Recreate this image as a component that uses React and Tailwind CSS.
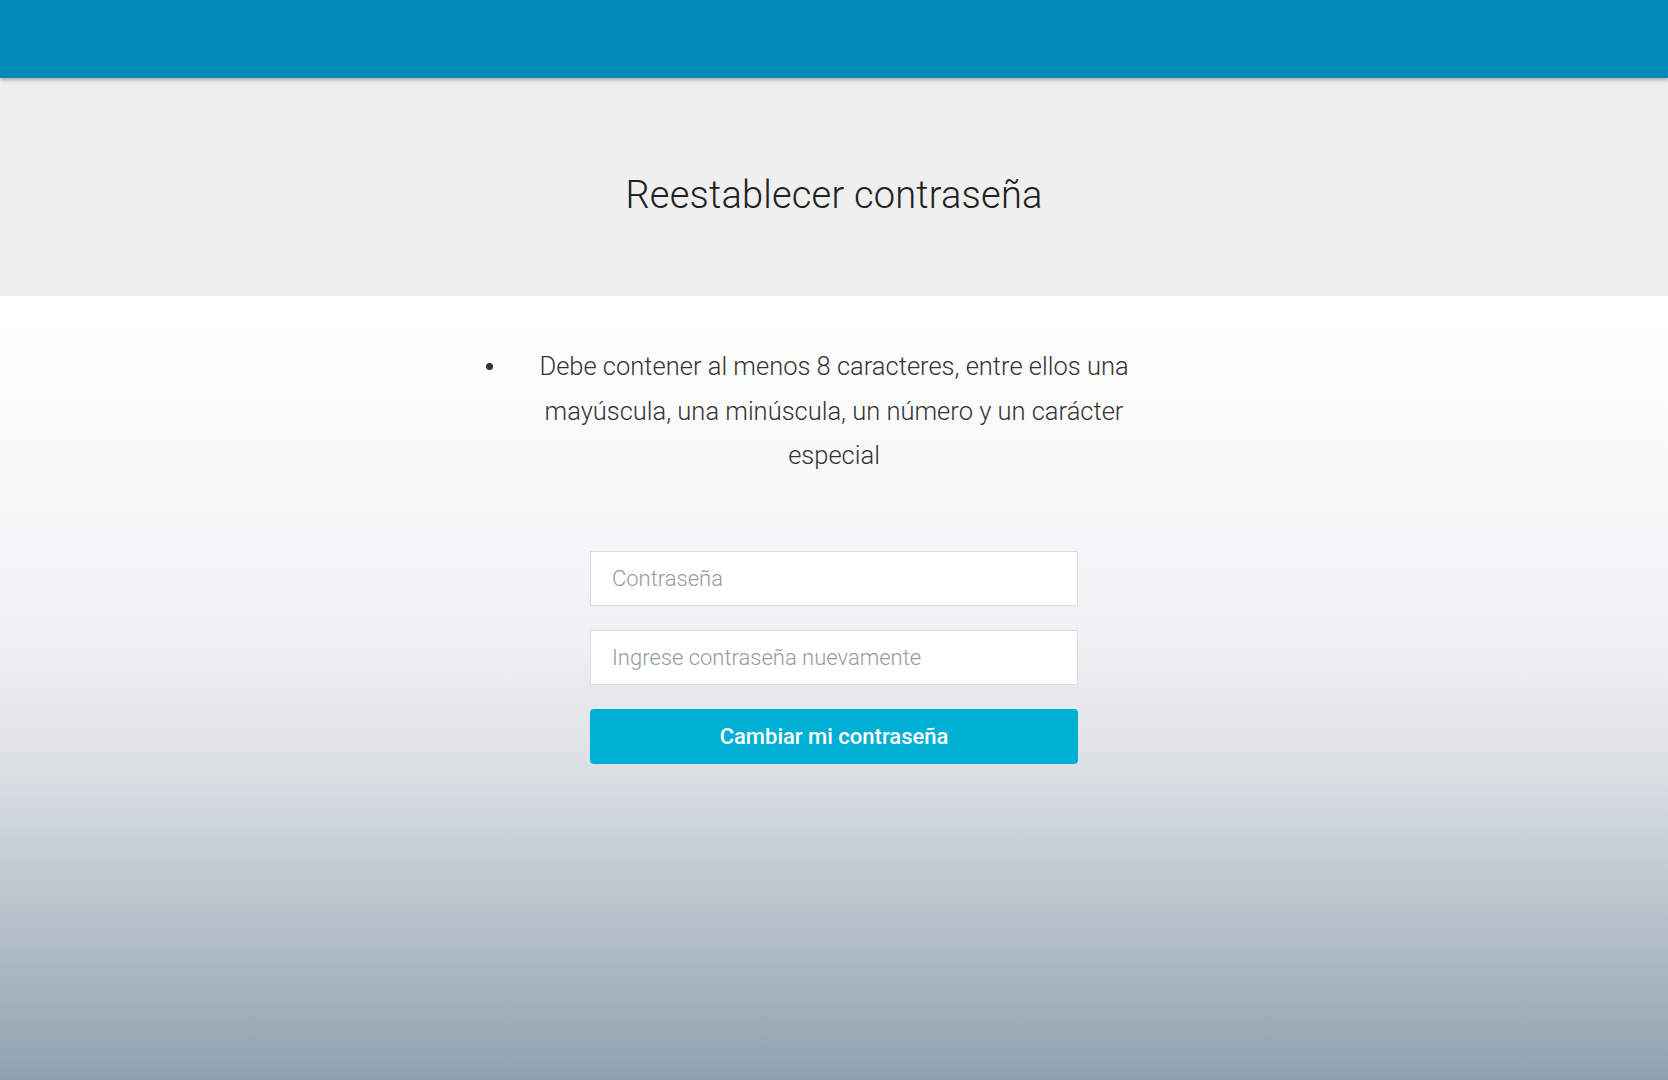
export default function App() {
  return (
    <div className="min-h-screen flex flex-col font-['Roboto','Liberation_Sans',sans-serif] text-[#333]">
      {/* top bar */}
      <header className="h-[78px] bg-[#0189b9] shadow-[0_2px_4px_rgba(0,0,0,0.3)] relative z-10" />

      {/* title band */}
      <section className="h-[218px] bg-[#efefef] flex items-center justify-center pt-[16px]">
        <h1 className="text-[38px] font-light tracking-[0.2px] text-[#222]">Reestablecer contraseña</h1>
      </section>

      {/* form area */}
      <main className="flex-1 bg-[linear-gradient(to_bottom,#ffffff_0%,#f8f8f9_25%,#eef0f2_45%,#dfe3e7_58%,#c4cdd5_72%,#aab7c2_86%,#8fa1b0_100%)] pt-[48px] pb-[40px]">
        <div className="mx-auto w-[620px] flex">
          <span className="-ml-[38px] w-[38px] shrink-0 pt-[19px]">
            <span className="block w-[7px] h-[7px] rounded-full bg-[#333]" />
          </span>
          <p className="flex-1 text-center text-[25.5px] leading-[44.7px] font-light text-[#333]">
            Debe contener al menos 8 caracteres, entre ellos una mayúscula, una minúscula, un número y un carácter especial
          </p>
        </div>

        <form className="mx-auto mt-[73px] w-[488px] flex flex-col gap-[24px]">
          <input
            type="password"
            placeholder="Contraseña"
            className="h-[55px] w-full bg-white border border-[#dcdcdc] px-[21px] text-[22px] font-light text-[#555] placeholder:text-[#9a9a9a] outline-none"
          />
          <input
            type="password"
            placeholder="Ingrese contraseña nuevamente"
            className="h-[55px] w-full bg-white border border-[#dcdcdc] px-[21px] text-[22px] font-light text-[#555] placeholder:text-[#9a9a9a] outline-none"
          />
          <button
            type="button"
            className="h-[55px] w-full rounded-[4px] bg-[#00b0d4] text-white text-[22px] font-medium"
          >
            Cambiar mi contraseña
          </button>
        </form>
      </main>
    </div>
  );
}
